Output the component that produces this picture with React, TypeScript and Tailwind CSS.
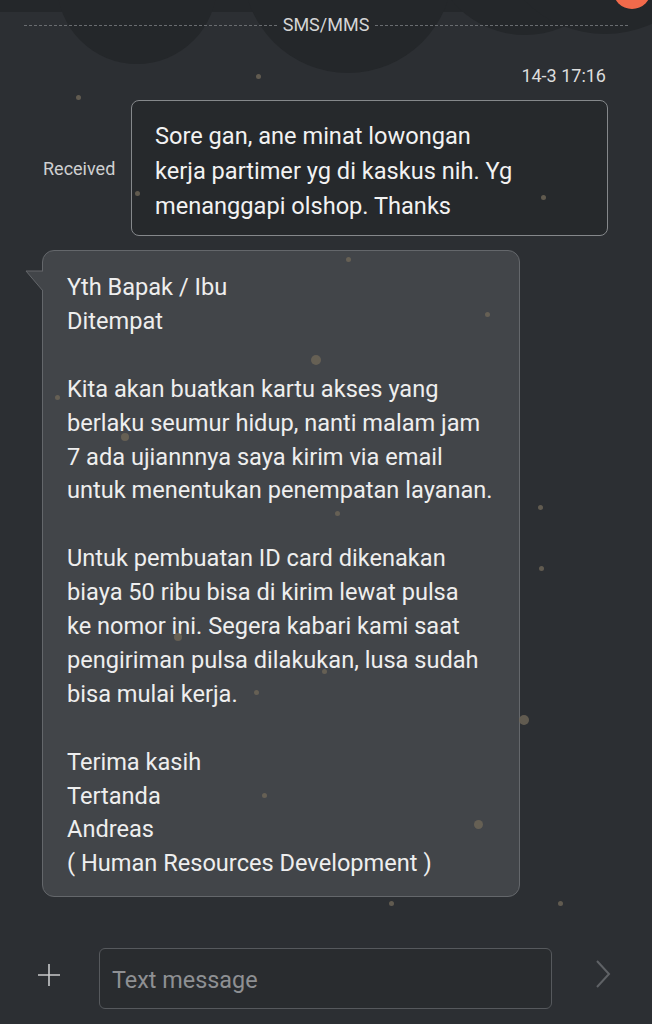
import React from 'react';

const dots = [
  { x: 258, y: 76, s: 5 },
  { x: 78, y: 97, s: 5 },
  { x: 137, y: 193, s: 5 },
  { x: 543, y: 197, s: 5 },
  { x: 348, y: 259, s: 5 },
  { x: 487, y: 314, s: 5 },
  { x: 316, y: 360, s: 10 },
  { x: 57, y: 397, s: 5 },
  { x: 125, y: 437, s: 8 },
  { x: 337, y: 513, s: 5 },
  { x: 540, y: 507, s: 5 },
  { x: 541, y: 568, s: 5 },
  { x: 178, y: 637, s: 8 },
  { x: 324, y: 671, s: 5 },
  { x: 256, y: 692, s: 5 },
  { x: 524, y: 720, s: 10 },
  { x: 264, y: 795, s: 5 },
  { x: 478, y: 824, s: 9 },
  { x: 391, y: 903, s: 5 },
  { x: 560, y: 903, s: 5 },
];

const blobs = [
  { x: 137, y: -16, r: 80 },
  { x: 348, y: -32, r: 105 },
  { x: 525, y: -60, r: 95 },
  { x: 605, y: -80, r: 114 },
];

const paragraphs = [
  ['Yth Bapak / Ibu', 'Ditempat'],
  [
    'Kita akan buatkan kartu akses yang',
    'berlaku seumur hidup, nanti malam jam',
    '7 ada ujiannnya saya kirim via email',
    'untuk menentukan penempatan layanan.',
  ],
  [
    'Untuk pembuatan ID card dikenakan',
    'biaya 50 ribu bisa di kirim lewat pulsa',
    'ke nomor ini. Segera kabari kami saat',
    'pengiriman pulsa dilakukan, lusa sudah',
    'bisa mulai kerja.',
  ],
  ['Terima kasih', 'Tertanda', 'Andreas', '( Human Resources Development )'],
];

export default function App() {
  return (
    <div className="relative h-[1024px] w-full overflow-hidden bg-[#2c2f33] font-['Roboto',sans-serif] text-[#eeeeee]">
      {/* dark blobs behind the header */}
      <div className="absolute left-0 top-0 h-[12px] w-full bg-[#24272a]" />
      {blobs.map((b, i) => (
        <div
          key={i}
          className="absolute rounded-full bg-[#24272a]"
          style={{ left: b.x - b.r, top: b.y - b.r, width: b.r * 2, height: b.r * 2 }}
        />
      ))}
      <div className="absolute left-[613px] top-[-29px] h-[38px] w-[38px] rounded-full bg-[#f26a4b]" />

      <div className="relative flex flex-col">
        <div className="flex items-center px-[24px] pt-[14px]">
          <div className="h-0 flex-1 border-t border-dashed border-[#6a6d71]" />
          <span className="px-[6px] text-[18px] leading-[22px] text-[#d4d5d6]">SMS/MMS</span>
          <div className="h-0 flex-1 border-t border-dashed border-[#6a6d71]" />
        </div>

        <div className="mt-[29px] pr-[46px] text-right text-[18px] leading-[22px] text-[#dcdddd]">14-3 17:16</div>

        <div className="mt-[13px] flex items-center pl-[43px] pr-[44px]">
          <span className="text-[18px] text-[#cfd0d1]">Received</span>
          <div className="ml-auto w-[477px] whitespace-nowrap rounded-[8px] border border-[#85888b] bg-[#26292c] px-[23px] pb-[11px] pt-[18px] text-[23.6px] leading-[35px] text-[#f2f2f2]">
            <div>Sore gan, ane minat lowongan</div>
            <div>kerja partimer yg di kaskus nih. Yg</div>
            <div>menanggapi olshop. Thanks</div>
          </div>
        </div>

        <div className="relative ml-[42px] mt-[14px] w-[478px] whitespace-nowrap rounded-[12px] border border-[#64676b] bg-[#424549] px-[24px] pb-[15px] pt-[20px] text-[23.6px] leading-[33.9px] text-[#eeeeee]">
          <svg className="absolute left-[-18px] top-[19px]" width="19" height="24" viewBox="0 0 19 24">
            <path d="M19 1 L1 1 L19 22 Z" fill="#424549" />
            <path d="M18 1 L1 1 L18 21" fill="none" stroke="#64676b" strokeWidth="1" />
          </svg>
          {paragraphs.map((p, i) => (
            <div key={i} className={i > 0 ? 'mt-[33.9px]' : ''}>
              {p.map((line) => (
                <div key={line}>{line}</div>
              ))}
            </div>
          ))}
        </div>
      </div>

      {dots.map((d, i) => (
        <div
          key={i}
          className="absolute rounded-full bg-[#6f6757]/80"
          style={{ left: d.x - d.s / 2, top: d.y - d.s / 2, width: d.s, height: d.s }}
        />
      ))}

      <div className="absolute bottom-[15px] left-0 flex w-full items-center">
        <div className="flex w-[99px] justify-center pb-[8px] pr-[2px]">
          <svg width="24" height="24" viewBox="0 0 24 24" stroke="#c9cacb" strokeWidth="1.6">
            <path d="M12 1 V23 M1 12 H23" />
          </svg>
        </div>
        <div className="flex h-[61px] w-[453px] items-center rounded-[6px] border border-[#56595d] bg-[#292c2f] px-[12px] pt-[4px] text-[23.4px] text-[#8e9093]">
          Text message
        </div>
        <div className="flex flex-1 justify-center pb-[10px] pl-[2px]">
          <svg width="16" height="28" viewBox="0 0 16 28" fill="none" stroke="#5f6266" strokeWidth="2">
            <path d="M2 1 L14 14 L2 27" />
          </svg>
        </div>
      </div>
    </div>
  );
}
